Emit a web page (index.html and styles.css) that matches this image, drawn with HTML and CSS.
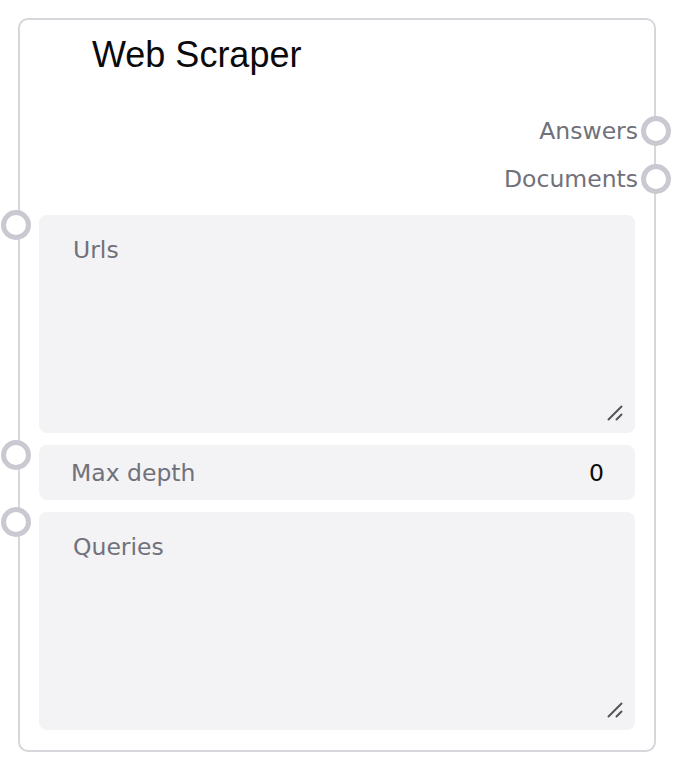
FILE: index.html
```html
<!DOCTYPE html>
<html>
<head>
<meta charset="utf-8">
<link rel="stylesheet" href="styles.css">
</head>
<body>
<div class="node">
  <div class="title">Web Scraper</div>
  <div class="outputs">
    <div class="out-row"><span class="out-label">Answers</span><span class="handle handle-right"></span></div>
    <div class="out-row"><span class="out-label">Documents</span><span class="handle handle-right"></span></div>
  </div>
  <div class="fields">
    <div class="field">
      <span class="handle handle-left"></span>
      <textarea class="area" placeholder="Urls"></textarea>
      <svg class="grip" width="18" height="16" viewBox="0 0 18 16"><path d="M1.5 14.5 L14.5 1.5 M9.5 14.5 L14.5 9.5" stroke="#555" stroke-width="2" stroke-linecap="round" fill="none"/></svg>
    </div>
    <div class="field">
      <span class="handle handle-left"></span>
      <div class="num">
        <span class="num-label">Max depth</span>
        <span class="num-value">0</span>
      </div>
    </div>
    <div class="field">
      <span class="handle handle-left"></span>
      <textarea class="area" placeholder="Queries"></textarea>
      <svg class="grip" width="18" height="16" viewBox="0 0 18 16"><path d="M1.5 14.5 L14.5 1.5 M9.5 14.5 L14.5 9.5" stroke="#555" stroke-width="2" stroke-linecap="round" fill="none"/></svg>
    </div>
  </div>
</div>
</body>
</html>
```
FILE: styles.css
```css
html, body {
  margin: 0;
  padding: 0;
  background: #ffffff;
}
body {
  padding: 18px;
  font-family: "DejaVu Sans", sans-serif;
}
.node {
  width: 638px;
  height: 734px;
  box-sizing: border-box;
  border: 2px solid #d6d6db;
  border-radius: 10px;
  background: #fff;
  padding: 0 19px 0 19px;
  display: flex;
  flex-direction: column;
}
.title {
  font-family: "Liberation Sans", Arial, sans-serif;
  font-size: 36px;
  color: #0a0a0a;
  padding: 15px 0 0 53px;
  height: 49px;
  line-height: 40px;
}
.outputs {
  display: flex;
  flex-direction: column;
  margin-top: 23px;
  margin-right: -19px;
}
.out-row {
  position: relative;
  height: 48px;
  display: flex;
  align-items: center;
  justify-content: flex-end;
  padding-right: 16px;
}
.out-label {
  font-size: 23.5px;
  color: #71717a;
}
.handle {
  position: absolute;
  width: 30px;
  height: 30px;
  box-sizing: border-box;
  border: 5px solid #c9c9d1;
  border-radius: 50%;
  background: #fff;
}
.handle-right {
  right: -17px;
  top: 9px;
}
.fields {
  display: flex;
  flex-direction: column;
  gap: 12px;
  margin-top: 12px;
}
.field {
  position: relative;
}
.handle-left {
  left: -38px;
  top: -5px;
}
.area {
  display: block;
  width: 100%;
  height: 218px;
  box-sizing: border-box;
  border: none;
  outline: none;
  border-radius: 8px;
  background: #f3f3f5;
  padding: 21px 34px;
  font-family: "DejaVu Sans", sans-serif;
  font-size: 23.5px;
  color: #111;
  resize: none;
}
.area::placeholder {
  color: #71717a;
}
.grip {
  position: absolute;
  right: 10px;
  bottom: 12px;
}
.num {
  height: 55px;
  border-radius: 8px;
  background: #f3f3f5;
  display: flex;
  align-items: center;
  justify-content: space-between;
  padding: 0 31px 0 32px;
  font-size: 23.5px;
}
.num-label {
  color: #71717a;
}
.num-value {
  color: #0a0a0a;
}
```
